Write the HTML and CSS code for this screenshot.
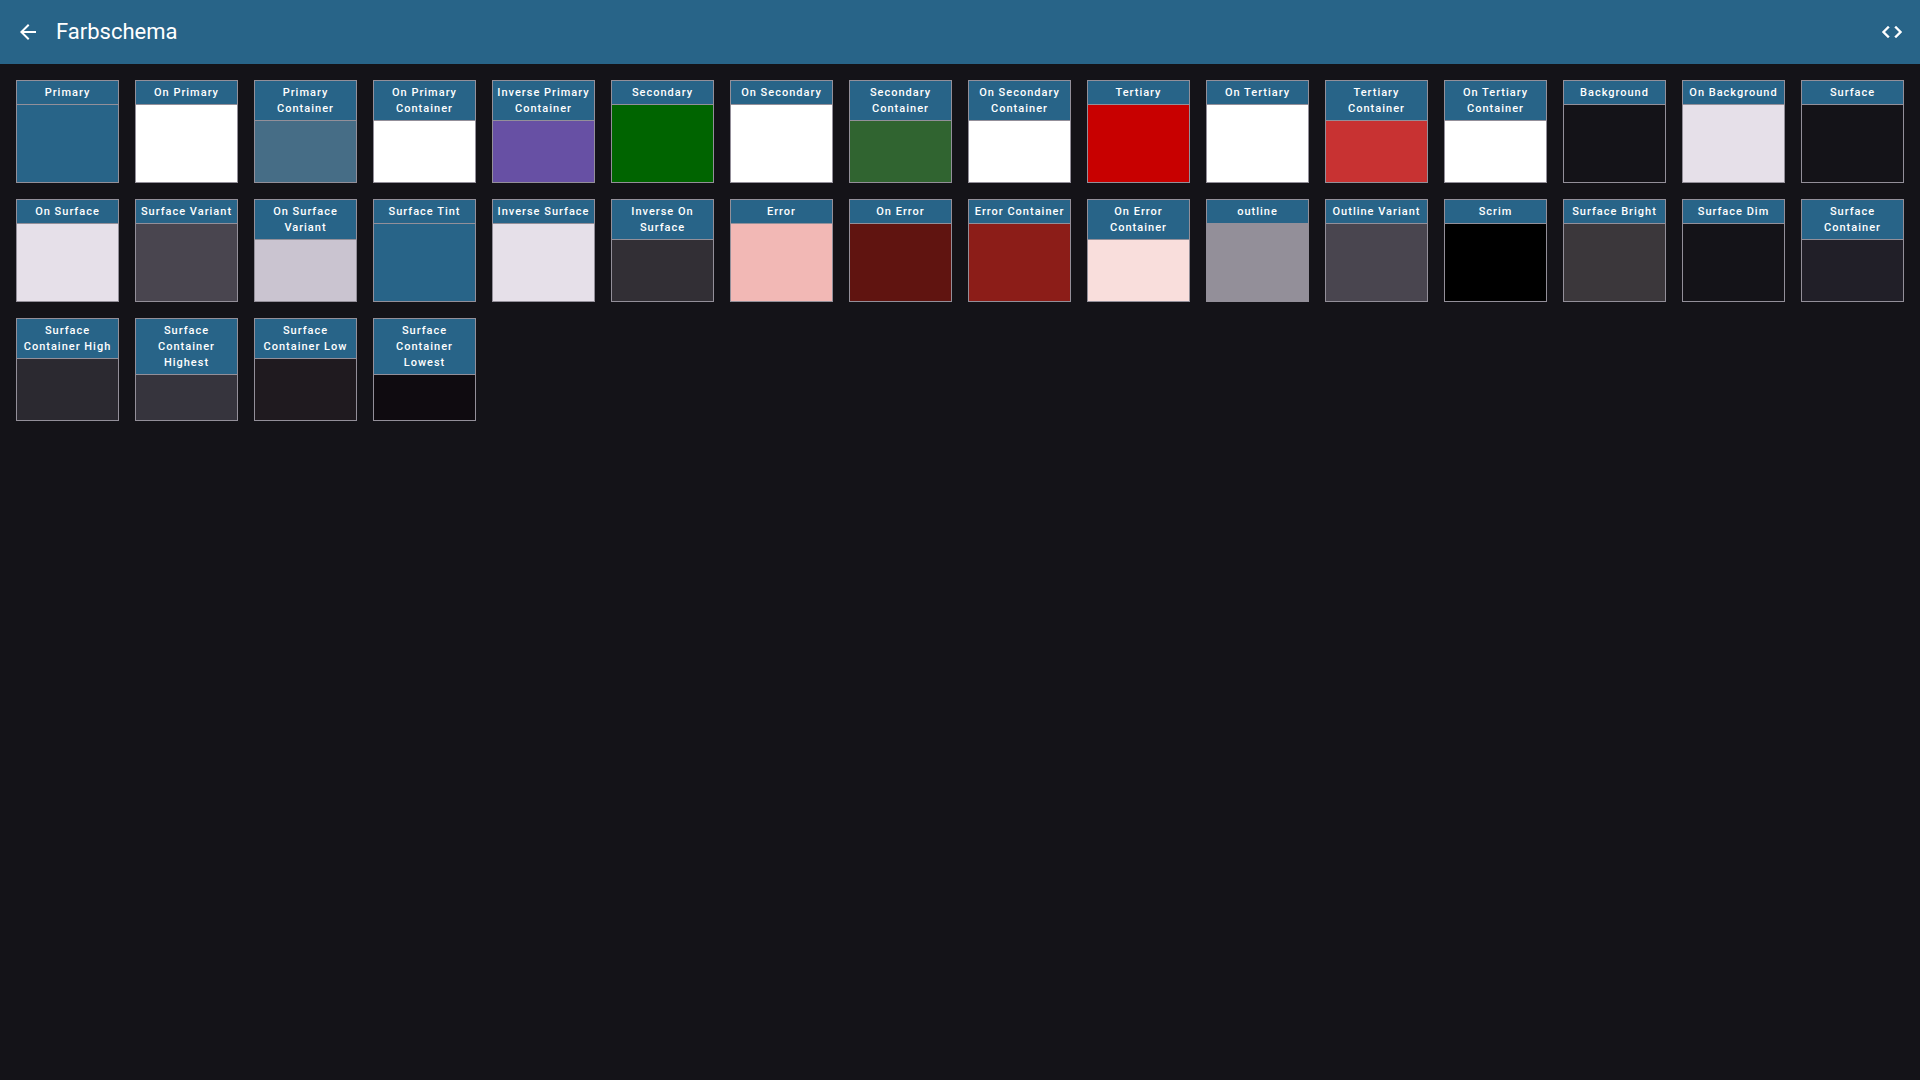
FILE: index.html
```html
<!DOCTYPE html>
<html lang="de">
<head>
<meta charset="utf-8">
<meta name="viewport" content="width=device-width, initial-scale=1">
<title>Farbschema</title>
<link rel="stylesheet" href="styles.css">
</head>
<body>
<header class="app-bar">
  <button class="icon-button" type="button" aria-label="Zurück">
    <svg class="icon" viewBox="0 0 24 24" aria-hidden="true"><path d="M20 11H7.83l5.59-5.59L12 4l-8 8 8 8 1.41-1.41L7.83 13H20v-2z"/></svg>
  </button>
  <h1 class="app-title">Farbschema</h1>
  <button class="icon-button" type="button" aria-label="Quellcode">
    <svg class="icon icon-bold" viewBox="0 0 24 24" aria-hidden="true"><path d="M9.4 16.6L4.8 12l4.6-4.6L8 6l-6 6 6 6 1.4-1.4zm5.2 0l4.6-4.6-4.6-4.6L16 6l6 6-6 6-1.4-1.4z"/></svg>
  </button>
</header>
<main class="swatches">
  <section class="swatch primary"><h2 class="label">Primary</h2></section>
  <section class="swatch on-primary"><h2 class="label">On Primary</h2></section>
  <section class="swatch primary-container"><h2 class="label">Primary Container</h2></section>
  <section class="swatch on-primary"><h2 class="label">On Primary Container</h2></section>
  <section class="swatch inverse-primary"><h2 class="label">Inverse Primary Container</h2></section>
  <section class="swatch secondary"><h2 class="label">Secondary</h2></section>
  <section class="swatch on-primary"><h2 class="label">On Secondary</h2></section>
  <section class="swatch secondary-container"><h2 class="label">Secondary Container</h2></section>
  <section class="swatch on-primary"><h2 class="label">On Secondary Container</h2></section>
  <section class="swatch tertiary"><h2 class="label">Tertiary</h2></section>
  <section class="swatch on-primary"><h2 class="label">On Tertiary</h2></section>
  <section class="swatch tertiary-container"><h2 class="label">Tertiary Container</h2></section>
  <section class="swatch on-primary"><h2 class="label">On Tertiary Container</h2></section>
  <section class="swatch surface"><h2 class="label">Background</h2></section>
  <section class="swatch on-surface"><h2 class="label">On Background</h2></section>
  <section class="swatch surface"><h2 class="label">Surface</h2></section>
  <section class="swatch on-surface"><h2 class="label">On Surface</h2></section>
  <section class="swatch surface-variant"><h2 class="label">Surface Variant</h2></section>
  <section class="swatch on-surface-variant"><h2 class="label">On Surface Variant</h2></section>
  <section class="swatch primary"><h2 class="label">Surface Tint</h2></section>
  <section class="swatch on-surface"><h2 class="label">Inverse Surface</h2></section>
  <section class="swatch inverse-on-surface"><h2 class="label">Inverse On Surface</h2></section>
  <section class="swatch error"><h2 class="label">Error</h2></section>
  <section class="swatch on-error"><h2 class="label">On Error</h2></section>
  <section class="swatch error-container"><h2 class="label">Error Container</h2></section>
  <section class="swatch on-error-container"><h2 class="label">On Error Container</h2></section>
  <section class="swatch outline"><h2 class="label">outline</h2></section>
  <section class="swatch surface-variant"><h2 class="label">Outline Variant</h2></section>
  <section class="swatch scrim"><h2 class="label">Scrim</h2></section>
  <section class="swatch surface-bright"><h2 class="label">Surface Bright</h2></section>
  <section class="swatch surface"><h2 class="label">Surface Dim</h2></section>
  <section class="swatch surface-container"><h2 class="label">Surface Container</h2></section>
  <section class="swatch surface-container-high"><h2 class="label">Surface Container High</h2></section>
  <section class="swatch surface-container-highest"><h2 class="label">Surface Container Highest</h2></section>
  <section class="swatch surface-container-low"><h2 class="label">Surface Container Low</h2></section>
  <section class="swatch surface-container-lowest"><h2 class="label">Surface Container Lowest</h2></section>
</main>
</body>
</html>
```
FILE: styles.css
```css
:root {
  --primary: #286488;
  --surface: #141318;
  --outline: #938f99;
}

* {
  box-sizing: border-box;
}

body {
  margin: 0;
  min-height: 100vh;
  background: var(--surface);
  color: #fff;
  font-family: Roboto, "Liberation Sans", sans-serif;
}

.app-bar {
  display: flex;
  align-items: center;
  gap: 8px;
  height: 64px;
  padding: 0 8px;
  background: var(--primary);
}

.app-title {
  flex: 1;
  margin: 0;
  font-size: 22px;
  font-weight: 400;
  line-height: 28px;
}

.icon-button {
  display: flex;
  padding: 8px;
  border: 0;
  border-radius: 50%;
  background: none;
  color: inherit;
  cursor: pointer;
}

.icon {
  width: 24px;
  height: 24px;
  fill: currentColor;
}

.icon-bold {
  stroke: currentColor;
  stroke-width: 0.4;
}

.swatches {
  display: grid;
  grid-template-columns: repeat(auto-fill, minmax(100px, 1fr));
  gap: 16px;
  padding: 16px;
}

.swatch {
  aspect-ratio: 1;
  border: 1px solid var(--outline);
}

.label {
  margin: 0;
  padding: 4px 3px 3px;
  border-bottom: 1px solid var(--outline);
  background: var(--primary);
  font-size: 11px;
  font-weight: 500;
  letter-spacing: 1px;
  line-height: 16px;
  text-align: center;
}

.primary { background: var(--primary); }
.on-primary { background: #fff; }
.primary-container { background: #466d86; }
.inverse-primary { background: #6750a4; }
.secondary { background: #006400; }
.secondary-container { background: #306430; }
.tertiary { background: #c80000; }
.tertiary-container { background: #c83232; }
.surface { background: var(--surface); }
.on-surface { background: #e6e0e9; }
.surface-variant { background: #49454f; }
.on-surface-variant { background: #cac4d0; }
.inverse-on-surface { background: #322f35; }
.error { background: #f2b8b5; }
.on-error { background: #601410; }
.error-container { background: #8c1d18; }
.on-error-container { background: #f9dedc; }
.outline { background: var(--outline); }
.scrim { background: #000; }
.surface-bright { background: #3b373b; }
.surface-container { background: #211f28; }
.surface-container-high { background: #2b2930; }
.surface-container-highest { background: #36343d; }
.surface-container-low { background: #1f1a1f; }
.surface-container-lowest { background: #0f0b10; }
```
